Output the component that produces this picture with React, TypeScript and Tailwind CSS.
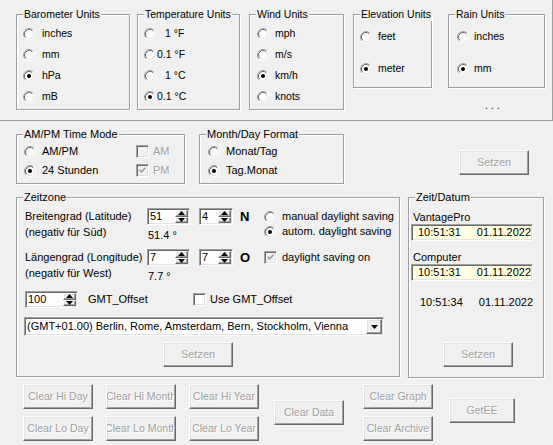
import React from 'react';

// classic Win32 look: 3D edges built from borders + inset shadows
const SUNKEN =
  'border border-t-[#a0a0a0] border-l-[#a0a0a0] border-r-white border-b-white shadow-[inset_1px_1px_0_#696969,inset_-1px_-1px_0_#e3e3e3]';
const RAISED =
  'border border-t-white border-l-white border-r-[#696969] border-b-[#696969] shadow-[inset_-1px_-1px_0_#a0a0a0,inset_1px_1px_0_#e3e3e3]';
const DISABLED_TEXT = 'text-[#a0a0a0] [text-shadow:1px_1px_0_#fff]';

function Radio({ checked }: { checked?: boolean }) {
  return (
    <svg width="12" height="12" viewBox="0 0 12 12" className="shrink-0">
      <circle cx="6" cy="6" r="4.5" fill="#fff" />
      <path d="M2.11 9.89A5.5 5.5 0 0 1 9.89 2.11" stroke="#a0a0a0" fill="none" />
      <path d="M2.82 9.18A4.5 4.5 0 0 1 9.18 2.82" stroke="#696969" fill="none" />
      <path d="M9.89 2.11A5.5 5.5 0 0 1 2.11 9.89" stroke="#ffffff" fill="none" />
      <path d="M9.18 2.82A4.5 4.5 0 0 1 2.82 9.18" stroke="#e3e3e3" fill="none" />
      {checked && <circle cx="6" cy="6" r="2" fill="#000" />}
    </svg>
  );
}

function Check({ checked, disabled }: { checked?: boolean; disabled?: boolean }) {
  return (
    <span
      className={`w-[13px] h-[13px] shrink-0 flex items-center justify-center ${SUNKEN} ${
        disabled ? 'bg-[#f0f0f0]' : 'bg-white'
      }`}
    >
      {checked && (
        <svg width="7" height="7" viewBox="0 0 7 7">
          <path d="M0.5 2.8 L2.5 4.8 L6.5 0.8" stroke={disabled ? '#a0a0a0' : '#000'} strokeWidth="1.8" fill="none" />
        </svg>
      )}
    </span>
  );
}

function Arrow({ up }: { up?: boolean }) {
  return (
    <svg width="7" height="4" viewBox="0 0 7 4">
      <path d={up ? 'M0 4 L3.5 0 L7 4 Z' : 'M0 0 L7 0 L3.5 4 Z'} fill="#000" />
    </svg>
  );
}

function Spin({ value, w }: { value: string; w: string }) {
  return (
    <div className={`${w} h-[17px] flex bg-white ${SUNKEN}`}>
      <span className="flex-1 pl-[2px] leading-[15px]">{value}</span>
      <div className="w-[14px] flex flex-col py-[1px] pr-[1px]">
        <div className={`flex-1 flex items-center justify-center bg-[#f0f0f0] ${RAISED}`}>
          <Arrow up />
        </div>
        <div className={`flex-1 flex items-center justify-center bg-[#f0f0f0] ${RAISED}`}>
          <Arrow />
        </div>
      </div>
    </div>
  );
}

function Group({ label, className, children }: { label: string; className: string; children?: React.ReactNode }) {
  return (
    <div className={`relative shrink-0 border border-[#a0a0a0] shadow-[inset_1px_1px_0_#fff,1px_1px_0_#fff] ${className}`}>
      <span className="absolute -top-[8px] left-[6px] bg-[#f0f0f0] px-[1px] leading-[14px] whitespace-nowrap">
        {label}
      </span>
      {children}
    </div>
  );
}

function Btn({ children, className }: { children: React.ReactNode; className: string }) {
  return (
    <div
      className={`shrink-0 h-[25px] flex items-center justify-center whitespace-nowrap overflow-hidden bg-[#f0f0f0] ${RAISED} ${DISABLED_TEXT} ${className}`}
    >
      {children}
    </div>
  );
}

function RadioRow({ label, checked, gap, className = 'h-[21px]' }: { label: React.ReactNode; checked?: boolean; gap: string; className?: string }) {
  return (
    <div className={`flex items-center ${gap} ${className}`}>
      <Radio checked={checked} />
      <span className="whitespace-nowrap">{label}</span>
    </div>
  );
}

export default function App() {
  return (
    <div className="w-[553px] h-[445px] bg-[#f0f0f0] text-black text-[11px] font-['Liberation_Sans',Arial,sans-serif] overflow-hidden select-none">
      {/* units panel */}
      <div className="h-[121px] border-r border-b border-[#a0a0a0] flex items-start pt-[14px] pl-[16px] text-[10.5px]">
        <Group label="Barometer Units" className="w-[114px] h-[96px] pt-[8px] pl-[6px]">
          <RadioRow label="inches" gap="gap-[7px]" />
          <RadioRow label="mm" gap="gap-[7px]" />
          <RadioRow label="hPa" gap="gap-[7px]" checked />
          <RadioRow label="mB" gap="gap-[7px]" />
        </Group>
        <Group label="Temperature Units" className="ml-[7px] w-[103px] h-[96px] pt-[8px] pl-[6px]">
          <RadioRow label={<span className="pl-[8px]">1 °F</span>} gap="gap-[1px]" />
          <RadioRow label="0.1 °F" gap="gap-[1px]" />
          <RadioRow label={<span className="pl-[8px]">1 °C</span>} gap="gap-[1px]" />
          <RadioRow label="0.1 °C" gap="gap-[1px]" checked />
        </Group>
        <Group label="Wind Units" className="ml-[9px] w-[95px] h-[96px] pt-[8px] pl-[7px]">
          <RadioRow label="mph" gap="gap-[6px]" />
          <RadioRow label="m/s" gap="gap-[6px]" />
          <RadioRow label="km/h" gap="gap-[6px]" checked />
          <RadioRow label="knots" gap="gap-[6px]" />
        </Group>
        <Group label="Elevation Units" className="ml-[9px] w-[79px] h-[74px] pt-[11px] pl-[6px] flex flex-col gap-[11px]">
          <RadioRow label="feet" gap="gap-[6px]" />
          <RadioRow label="meter" gap="gap-[6px]" checked />
        </Group>
        <div className="ml-[16px] flex flex-col">
          <Group label="Rain Units" className="w-[97px] h-[74px] pt-[11px] pl-[8px] flex flex-col gap-[11px]">
            <RadioRow label="inches" gap="gap-[5px]" />
            <RadioRow label="mm" gap="gap-[5px]" checked />
          </Group>
          <span className="mt-[10px] pl-[37px] leading-[14px]">. . .</span>
        </div>
      </div>

      {/* time mode / date format */}
      <div className="mt-[13px] pl-[16px] flex items-start">
        <Group label="AM/PM Time Mode" className="w-[169px] h-[50px] pt-[7px] pl-[7px]">
          <div className="flex items-center h-[19px]">
            <div className="w-[112px] flex items-center gap-[6px]">
              <Radio />
              <span>AM/PM</span>
            </div>
            <div className="flex items-center gap-[4px]">
              <Check disabled />
              <span className={DISABLED_TEXT}>AM</span>
            </div>
          </div>
          <div className="flex items-center h-[19px]">
            <div className="w-[112px] flex items-center gap-[6px]">
              <Radio checked />
              <span>24 Stunden</span>
            </div>
            <div className="flex items-center gap-[4px]">
              <Check disabled checked />
              <span className={DISABLED_TEXT}>PM</span>
            </div>
          </div>
        </Group>
        <Group label="Month/Day Format" className="ml-[14px] w-[145px] h-[50px] pt-[7px] pl-[8px]">
          <RadioRow label="Monat/Tag" gap="gap-[6px]" className="h-[19px]" />
          <RadioRow label="Tag.Monat" gap="gap-[6px]" className="h-[19px]" checked />
        </Group>
        <Btn className="ml-[115px] mt-[16px] w-[70px]">Setzen</Btn>
      </div>

      {/* zeitzone + zeit/datum */}
      <div className="mt-[13px] pl-[16px] flex items-start">
        <Group label="Zeitzone" className="w-[384px] h-[180px] pt-[10px] pl-[8px] flex flex-col">
          <div className="flex items-start">
            <div className="w-[122px] leading-[16px]">
              <div>Breitengrad (Latitude)</div>
              <div>(negativ für Süd)</div>
            </div>
            <div className="w-[43px] flex flex-col">
              <Spin value="51" w="w-[43px]" />
              <span className="mt-[3px] pl-[1px] leading-[14px]">51.4 °</span>
            </div>
            <div className="ml-[9px]">
              <Spin value="4" w="w-[34px]" />
            </div>
            <div className="w-[31px] h-[17px] pl-[7px] flex items-center text-[13px] font-bold">N</div>
            <div className="flex flex-col pt-[1px]">
              <RadioRow label="manual daylight saving" gap="gap-[6px]" className="h-[15px]" />
              <RadioRow label="autom. daylight saving" gap="gap-[6px]" className="h-[15px]" checked />
            </div>
          </div>

          <div className="mt-[7px] flex items-start">
            <div className="w-[122px] leading-[16px]">
              <div>Längengrad (Longitude)</div>
              <div>(negativ für West)</div>
            </div>
            <div className="w-[43px] flex flex-col">
              <Spin value="7" w="w-[43px]" />
              <span className="mt-[3px] pl-[1px] leading-[14px]">7.7 °</span>
            </div>
            <div className="ml-[9px]">
              <Spin value="7" w="w-[34px]" />
            </div>
            <div className="w-[31px] h-[17px] pl-[7px] flex items-center text-[13px] font-bold">O</div>
            <div className="h-[17px] flex items-center gap-[5px]">
              <Check disabled checked />
              <span>daylight saving on</span>
            </div>
          </div>

          <div className="mt-[8px] flex items-center">
            <Spin value="100" w="w-[53px]" />
            <span className="ml-[10px] w-[105px]">GMT_Offset</span>
            <div className="flex items-center gap-[4px]">
              <Check />
              <span>Use GMT_Offset</span>
            </div>
          </div>

          <div className={`mt-[9px] -ml-[1px] w-[360px] h-[19px] flex bg-white ${SUNKEN}`}>
            <span className="flex-1 pl-[2px] leading-[17px] whitespace-nowrap">
              (GMT+01.00) Berlin, Rome, Amsterdam, Bern, Stockholm, Vienna
            </span>
            <div className={`w-[16px] m-[1px] flex items-center justify-center bg-[#f0f0f0] ${RAISED}`}>
              <Arrow />
            </div>
          </div>

          <Btn className="mt-[6px] ml-[138px] w-[70px]">Setzen</Btn>
        </Group>

        <Group label="Zeit/Datum" className="ml-[8px] w-[136px] h-[181px] pt-[12px] flex flex-col">
          <span className="pl-[4px] leading-[14px]">VantagePro</span>
          <div className={`ml-[2px] w-[122px] h-[17px] flex items-center pl-[6px] bg-[#ffffe1] ${SUNKEN}`}>
            <span>10:51:31</span>
            <span className="ml-[16px]">01.11.2022</span>
          </div>
          <span className="mt-[9px] pl-[4px] leading-[14px]">Computer</span>
          <div className={`ml-[2px] w-[122px] h-[17px] flex items-center pl-[6px] bg-[#ffffe1] ${SUNKEN}`}>
            <span>10:51:31</span>
            <span className="ml-[16px]">01.11.2022</span>
          </div>
          <div className="mt-[14px] pl-[11px] leading-[14px] flex">
            <span>10:51:34</span>
            <span className="ml-[16px]">01.11.2022</span>
          </div>
          <Btn className="mt-[33px] ml-[34px] w-[70px]">Setzen</Btn>
        </Group>
      </div>

      {/* clear buttons */}
      <div className="mt-[6px] pl-[23px] flex items-start text-[10.5px]">
        <div className="flex flex-col gap-[7px]">
          <Btn className="w-[70px]">Clear Hi Day</Btn>
          <Btn className="w-[70px]">Clear Lo Day</Btn>
        </div>
        <div className="ml-[13px] flex flex-col gap-[7px]">
          <Btn className="w-[70px]">Clear Hi Month</Btn>
          <Btn className="w-[70px]">Clear Lo Month</Btn>
        </div>
        <div className="ml-[13px] flex flex-col gap-[7px]">
          <Btn className="w-[70px]">Clear Hi Year</Btn>
          <Btn className="w-[70px]">Clear Lo Year</Btn>
        </div>
        <Btn className="ml-[15px] mt-[16px] w-[70px]">Clear Data</Btn>
        <div className="ml-[19px] flex flex-col gap-[7px]">
          <Btn className="w-[70px]">Clear Graph</Btn>
          <Btn className="w-[70px]">Clear Archive</Btn>
        </div>
        <Btn className="ml-[16px] mt-[14px] w-[66px]">GetEE</Btn>
      </div>
    </div>
  );
}
